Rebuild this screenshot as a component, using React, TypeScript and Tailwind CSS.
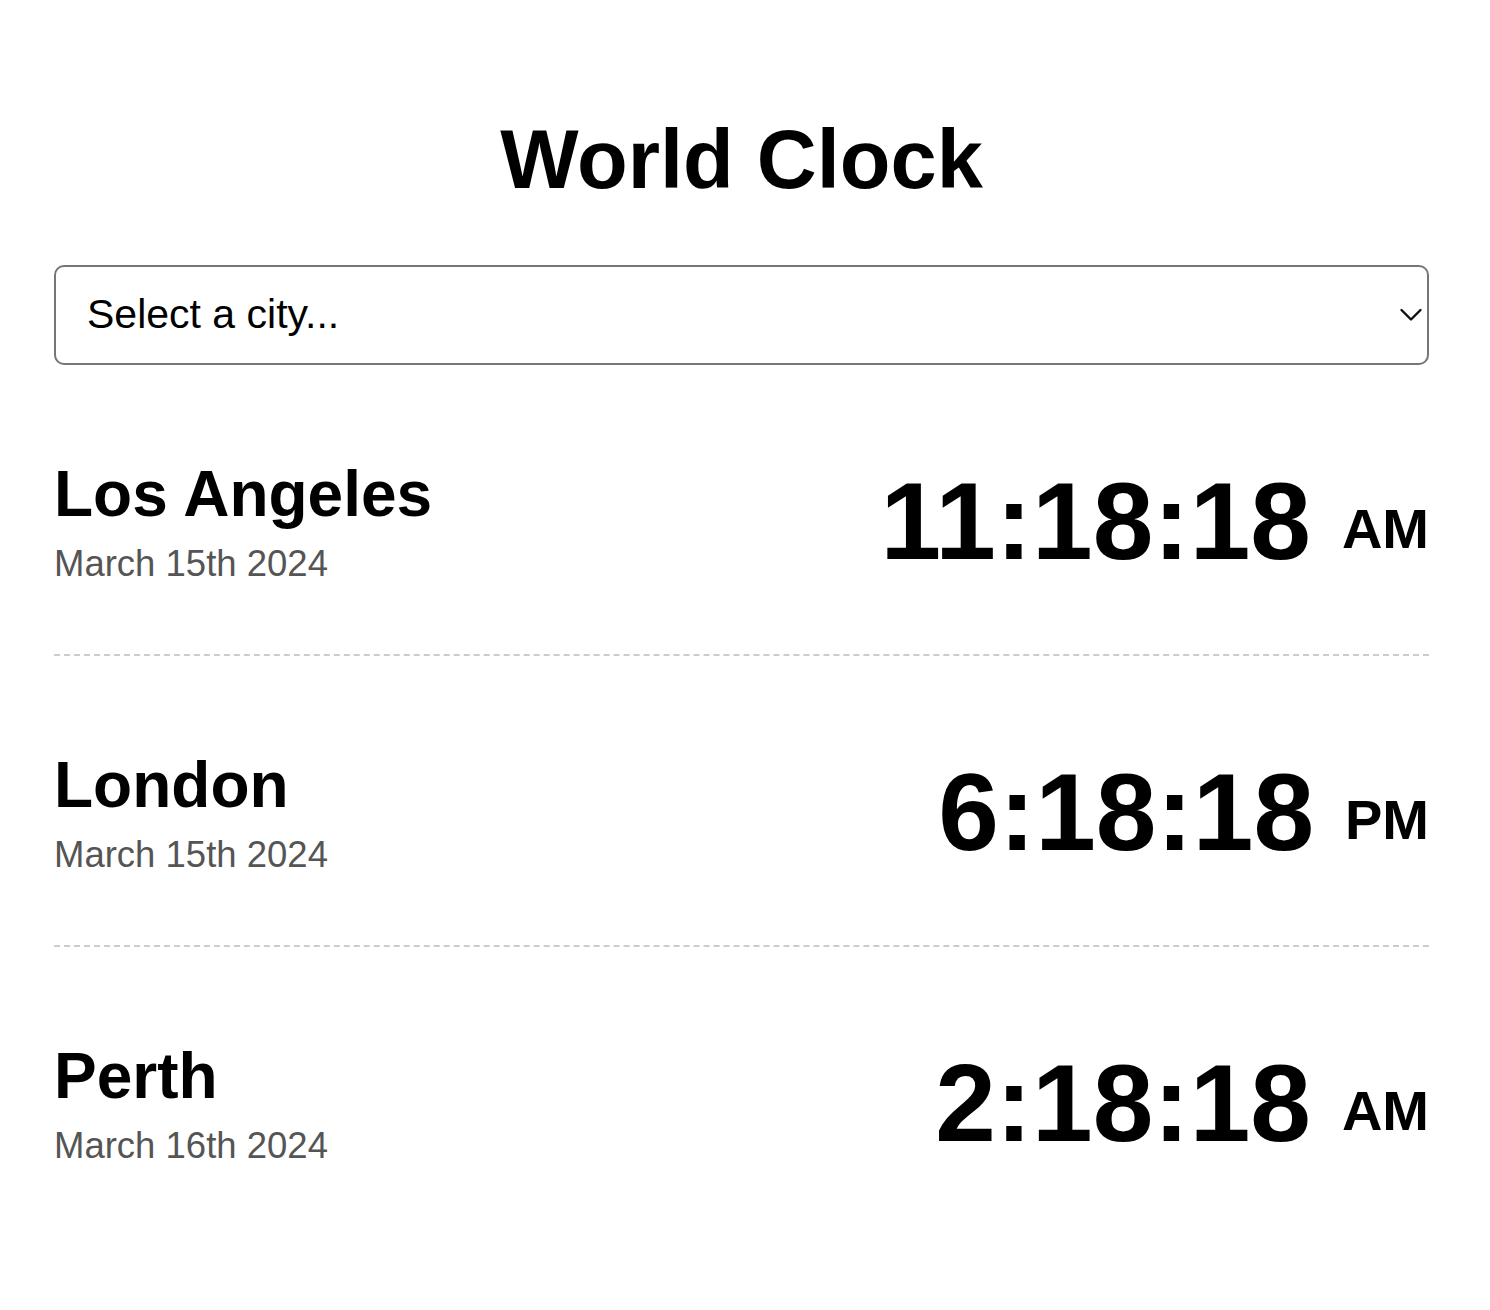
import React from "react";

const cities = [
  { name: "Los Angeles", date: "March 15th 2024", time: "11:18:18", period: "AM" },
  { name: "London", date: "March 15th 2024", time: "6:18:18", period: "PM" },
  { name: "Perth", date: "March 16th 2024", time: "2:18:18", period: "AM" },
];

export default function App() {
  return (
    <div className="min-h-screen bg-white pl-[54px] pr-[61px] pt-[118px] text-black font-['Liberation_Sans',Arial,sans-serif]">
      <h1 className="text-center text-[83px] font-bold leading-[84px]">World Clock</h1>
      <div className="relative mt-[63px]">
        <select
          defaultValue=""
          className="block h-[100px] w-full appearance-none rounded-[10px] border-2 border-[#767676] bg-white pl-[31px] text-[41px] text-black outline-none font-['Liberation_Sans',Arial,sans-serif]"
        >
          <option value="">Select a city...</option>
          <option value="tokyo">Tokyo</option>
          <option value="new-york">New York</option>
        </select>
        <svg
          className="pointer-events-none absolute right-[6px] top-1/2 -translate-y-1/2"
          width="24"
          height="14"
          viewBox="0 0 24 14"
          fill="none"
        >
          <path d="M2.5 2 L12 11.5 L21.5 2" stroke="#111" strokeWidth="2.4" strokeLinecap="round" strokeLinejoin="round" />
        </svg>
      </div>
      <div>
        {cities.map((c, i) => (
          <div
            key={c.name}
            className={
              i < cities.length - 1
                ? "flex items-center justify-between border-b-2 border-dashed border-[#cccccc] pb-[70px] pt-[93px]"
                : "flex items-center justify-between pb-[70px] pt-[93px]"
            }
          >
            <div className="flex flex-col">
              <div className="text-[64px] font-bold leading-[72px]">{c.name}</div>
              <div className="mt-[14px] text-[36.5px] leading-[40px] text-[#555555]">{c.date}</div>
            </div>
            <div className="flex items-center">
              <span className="text-[109px] font-bold leading-[112px]">{c.time}</span>
              <span className="ml-[31px] mt-[16px] text-[56px] font-bold leading-[56px]">{c.period}</span>
            </div>
          </div>
        ))}
      </div>
    </div>
  );
}
